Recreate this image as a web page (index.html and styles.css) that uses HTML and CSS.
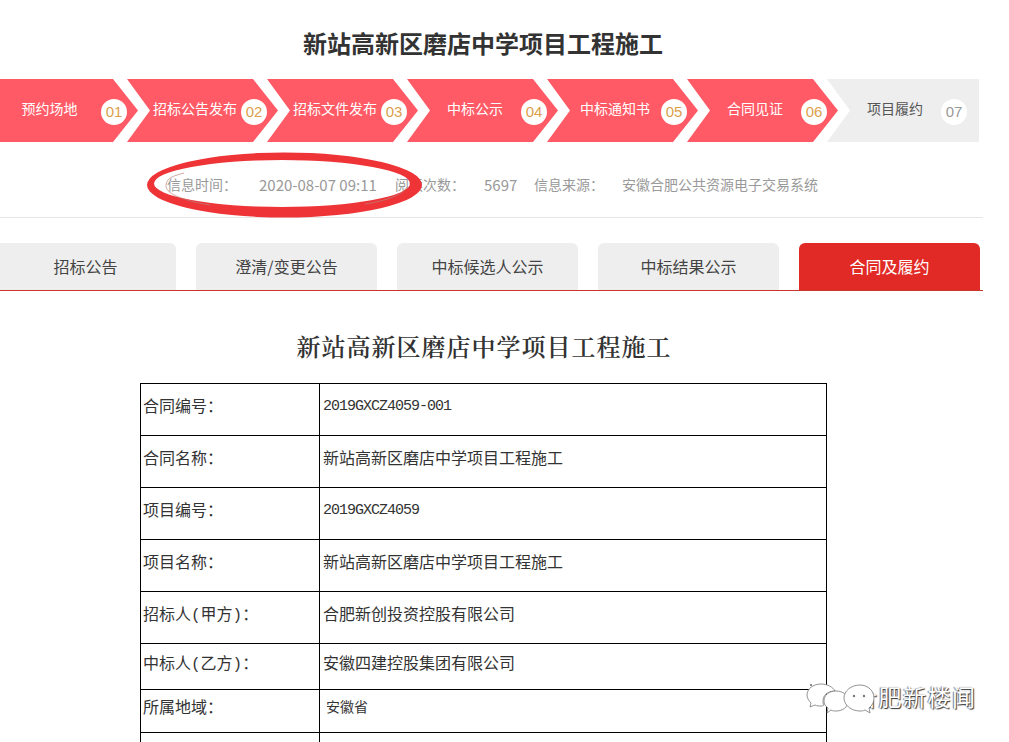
FILE: index.html
```html
<!DOCTYPE html>
<html lang="zh-CN">
<head>
    <meta charset="UTF-8">
    <title>新站高新区磨店中学项目工程施工</title>
    <link rel="stylesheet" href="styles.css">
</head>
<body>
    <div class="wrap">
        <h1 class="title">新站高新区磨店中学项目工程施工</h1>

        <!-- Steps -->
        <div class="steps">
            <div class="step"><span class="step-label">预约场地</span><span class="step-num">01</span></div>
            <div class="step"><span class="step-label">招标公告发布</span><span class="step-num">02</span></div>
            <div class="step"><span class="step-label">招标文件发布</span><span class="step-num">03</span></div>
            <div class="step"><span class="step-label">中标公示</span><span class="step-num">04</span></div>
            <div class="step"><span class="step-label">中标通知书</span><span class="step-num">05</span></div>
            <div class="step"><span class="step-label">合同见证</span><span class="step-num">06</span></div>
            <div class="step step-todo"><span class="step-label">项目履约</span><span class="step-num">07</span></div>
        </div>

        <!-- Info row, with the hand drawn circle on top -->
        <div class="meta">
            <span class="meta-key">信息时间：</span><span class="meta-val meta-time">2020-08-07 09:11</span>
            <span class="meta-key">阅读次数：</span><span class="meta-val meta-count">5697</span>
            <span class="meta-key">信息来源：</span><span class="meta-val meta-source">安徽合肥公共资源电子交易系统</span>
            <svg class="circle" width="290" height="80" viewBox="0 0 290 80">
                <path fill="#ee3436" fill-rule="evenodd" d="M7 40A137.5 32.5 0 1 1 282 40A137.5 32.5 0 1 1 7 40ZM14 38.5A128 23.5 0 1 0 270 38.5A128 23.5 0 1 0 14 38.5Z"/>
                <path fill="none" stroke="#b9837f" stroke-width="0.7" d="M70 60C40 55 25 48 26 40S34 31 44 28M267 42C263 50 245 56 225 59"/>
            </svg>
        </div>

        <!-- Tabs -->
        <div class="tabs">
            <div class="tab">招标公告</div>
            <div class="tab">澄清/变更公告</div>
            <div class="tab">中标候选人公示</div>
            <div class="tab">中标结果公示</div>
            <div class="tab tab-active">合同及履约</div>
        </div>

        <h2 class="heading">新站高新区磨店中学项目工程施工</h2>

        <table class="info">
            <tr><td class="key">合同编号：</td><td class="val code">2019GXCZ4059-001</td></tr>
            <tr><td class="key">合同名称：</td><td class="val">新站高新区磨店中学项目工程施工</td></tr>
            <tr><td class="key">项目编号：</td><td class="val code">2019GXCZ4059</td></tr>
            <tr><td class="key">项目名称：</td><td class="val">新站高新区磨店中学项目工程施工</td></tr>
            <tr><td class="key">招标人(甲方)：</td><td class="val">合肥新创投资控股有限公司</td></tr>
            <tr class="row-46"><td class="key">中标人(乙方)：</td><td class="val">安徽四建控股集团有限公司</td></tr>
            <tr class="row-43"><td class="key">所属地域：</td><td class="val small">安徽省</td></tr>
            <tr><td class="key"></td><td class="val"></td></tr>
        </table>
    </div>

    <!-- Watermark -->
    <div class="watermark">
        <svg class="watermark-icon" width="70" height="32" viewBox="0 0 70 32" fill="#fff" stroke="#777" stroke-width="0.8">
            <path d="M15 1C7 1 1 6 1 12c0 3 2 6 4 8l-1 4 5-2c2 1 4 1 6 1 1 0 2 0 3-1-1-1-1-3-1-4 0-6 5-10 12-10C27 4 21 1 15 1Z"/>
            <path d="M30 8c7 0 12 4 12 10s-5 10-12 10c-2 0-3 0-5-1l-4 3 1-5c-3-2-4-4-4-7 0-6 5-10 12-10Z"/>
            <circle cx="5" cy="2" r="1" stroke="none" fill="#666"/>
            <path d="M54 2c-9 0-16 6-16 13s7 13 16 13c2 0 3 0 5-1l5 3-1-5c3-2 5-6 5-10 0-7-6-13-14-13Z"/>
            <circle cx="48" cy="13" r="1.2" stroke="none" fill="#777"/>
            <circle cx="58" cy="13" r="1.2" stroke="none" fill="#777"/>
        </svg>
        <span class="watermark-text">合肥新楼闻</span>
    </div>
</body>
</html>
```

FILE: styles.css
```css
* {
    box-sizing: border-box;
}

html, body {
    height: 100%;
}

body {
    margin: 0;
    position: relative;
    overflow: hidden;
    background: #fff;
    color: #333;
    font-family: "Noto Sans CJK SC", "Liberation Sans", sans-serif;
}

.wrap {
    width: 983px;
    height: 100%;
    overflow: hidden;
}

.title {
    margin: 0;
    width: 966px;
    height: 79px;
    padding-top: 25px;
    text-align: center;
    font-size: 24px;
    line-height: 36px;
    font-weight: 700;
    color: #333;
}

/* Steps */
.steps {
    display: flex;
    margin-left: -13px;
    width: 996px;
    height: 63px;
}

.step {
    flex: none;
    display: flex;
    align-items: center;
    width: 151px;
    height: 63px;
    margin-right: -11px;
    padding-left: 22px;
    background: #ff5a65;
    color: #fff;
    clip-path: polygon(0 0, 126px 0, 151px 50%, 126px 100%, 0 100%, 23px 50%);
}

.step:first-child {
    clip-path: polygon(0 0, 126px 0, 151px 50%, 126px 100%, 0 100%);
}

.step-todo {
    width: 152px;
    margin-right: 0;
    background: #eee;
    color: #555;
    clip-path: polygon(0 0, 100% 0, 100% 100%, 0 100%, 23px 50%);
}

.step-label {
    width: 92px;
    text-align: center;
    font-size: 14px;
    line-height: 20px;
    margin-top: -6px;
    white-space: nowrap;
}

.step:first-child .step-label {
    padding-right: 11px;
}

.step-num {
    flex: none;
    width: 26px;
    height: 26px;
    border-radius: 50%;
    background: #fff;
    color: #dc9f4c;
    text-align: center;
    font-family: "Liberation Sans", sans-serif;
    font-size: 15px;
    line-height: 26px;
    margin-top: 2px;
}

.step-todo .step-num {
    color: #999;
}

/* Info row */
.meta {
    position: relative;
    display: flex;
    align-items: center;
    height: 76px;
    padding: 23px 0 14px 167px;
    border-bottom: 1px solid #e6e6e6;
    font-size: 14px;
    color: #999;
    white-space: nowrap;
}

.meta-key {
    width: 70px;
    font-family: "Noto Sans CJK TC", "Noto Sans CJK SC", sans-serif;
}

.meta-val {
    color: #999;
}

.meta-time {
    margin-left: 22px;
    width: 136px;
    font-size: 15px;
}

.meta-count {
    margin-left: 19px;
    width: 50px;
    font-size: 15px;
}

.meta-source {
    margin-left: 18px;
}

.circle {
    position: absolute;
    left: 140px;
    top: 3px;
}

/* Tabs */
.tabs {
    display: flex;
    gap: 20px;
    margin-top: 25px;
    margin-left: -5px;
    width: 988px;
    height: 48px;
    padding-left: 0;
    border-bottom: 1px solid #c9352e;
}

.tab {
    flex: none;
    width: 181px;
    height: 47px;
    background: #eee;
    border-radius: 6px 6px 0 0;
    text-align: center;
    font-size: 16px;
    line-height: 47px;
    color: #444;
}

.tab-active {
    background: #e12a25;
    color: #fff;
}

.heading {
    margin: 0;
    width: 968px;
    height: 92px;
    padding-top: 37px;
    text-align: center;
    font-family: "Noto Serif CJK SC", "Noto Sans CJK SC", serif;
    font-size: 24px;
    letter-spacing: 1px;
    line-height: 36px;
    font-weight: 600;
    color: #333;
}

/* Contract table */
.info {
    margin-left: 140px;
    width: 687px;
    border-collapse: collapse;
    table-layout: fixed;
    font-size: 16px;
    color: #333;
}

.info td {
    height: 52px;
    padding: 0 3px 10px;
    border: 1px solid #000;
    white-space: nowrap;
}

.info .key {
    width: 179px;
    padding-left: 2px;
    font-family: "Liberation Mono", "Noto Sans CJK SC", sans-serif;
}

.info .row-46 td {
    height: 46px;
}

.info .row-43 td {
    height: 43px;
}

.info .code {
    padding-bottom: 6px;
    font-family: "Liberation Mono", monospace;
    font-size: 15px;
    letter-spacing: -1px;
}

.info .small {
    padding-left: 6px;
    font-size: 14px;
}

/* Watermark */
.watermark {
    position: absolute;
    left: 806px;
    top: 683px;
    display: flex;
    align-items: flex-start;
}

.watermark-icon {
    position: relative;
    z-index: 1;
}

.watermark-text {
    margin-left: -22px;
    margin-top: -3px;
    font-size: 23px;
    letter-spacing: 1.5px;
    line-height: 32px;
    color: #fff;
    text-shadow: 1px 1px 1px #333, -1px 0 1px #777;
}
```
